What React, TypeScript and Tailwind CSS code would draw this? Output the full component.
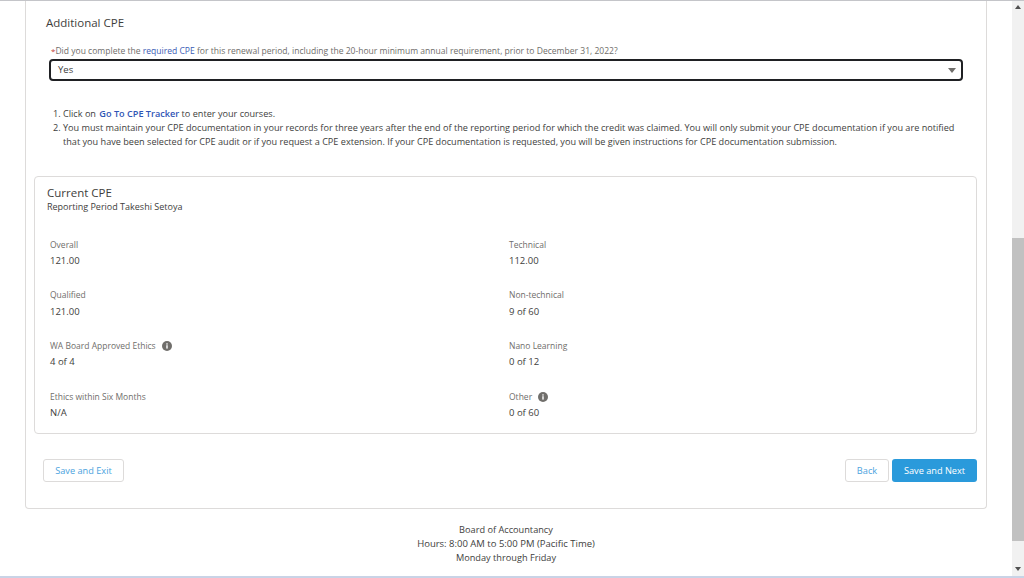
const font = { fontFamily: '"Open Sans", "Noto Sans", sans-serif' };

const InfoIcon = () => (
  <svg viewBox="0 0 10 10" className="w-[10px] h-[10px] ml-[6px]">
    <circle cx="5" cy="5" r="5" fill="#706e6b" />
    <rect x="4.3" y="4.2" width="1.4" height="3.4" fill="#fff" />
    <rect x="4.3" y="2.3" width="1.4" height="1.3" fill="#fff" />
  </svg>
);

const Stat = ({ label, value, info }: { label: string; value: string; info?: boolean }) => (
  <div className="h-[50.7px]">
    <div className="flex items-center h-[14px] text-[8.5px] text-[#706e6b]">
      {label}
      {info && <InfoIcon />}
    </div>
    <div className="mt-[1px] text-[9.5px] leading-[15px] text-[#3e3e3c]">{value}</div>
  </div>
);

const App = () => {
  return (
    <div className="flex h-[578px] w-[1024px] overflow-hidden bg-white" style={font}>
      <main className="flex-1 min-w-0 flex flex-col border-t border-[#c4c5c9] border-b-2 border-b-[#c9d3e6]">
        {/* outer card, top is cut off by the scroll */}
        <section className="ml-[25px] mr-[25px] h-[508px] border-x border-b border-[#dddbda] rounded-b-[4px] pl-[8px] pr-[9px] shrink-0">
          <h2 className="pl-[12px] pt-[14px] text-[11.5px] leading-[16px] text-[#3e3e3c]">Additional CPE</h2>
          <p className="h-[12px] pl-[17px] mt-[14px] text-[8.55px] leading-[12px] text-[#706e6b]">
            <span className="text-[8px] leading-none text-[#c23934]">*</span>
            Did you complete the <span className="text-[#3b5bb5]">required CPE</span> for this renewal period, including
            the 20-hour minimum annual requirement, prior to December 31, 2022?
          </p>
          <div className="ml-[15px] mr-[14px] mt-[2px] h-[22px] flex items-center justify-between border-2 border-[#1f2023] rounded-[4px] pl-[7px] pr-[5px] text-[9.5px] text-[#3e3e3c]">
            <span className="pt-[1px]">Yes</span>
            <svg viewBox="0 0 8 5" className="w-[8px] h-[5px]">
              <path d="M0 0h8L4 5z" fill="#706e6b" />
            </svg>
          </div>
          <ol className="mt-[26px] pl-[19px] pr-[14px] text-[9.15px] leading-[14px] text-[#3e3e3c]">
            <li className="pl-[10px] -indent-[10px]">
              1. Click on <span className="ml-[1px] font-semibold text-[#2f55b5]">Go To CPE Tracker</span> to enter your
              courses.
            </li>
            <li className="pl-[10px] -indent-[10px]">
              2. You must maintain your CPE documentation in your records for three years after the end of the reporting
              period for which the credit was claimed. You will only submit your CPE documentation if you are notified
              that you have been selected for CPE audit or if you request a CPE extension. If your CPE documentation is
              requested, you will be given instructions for CPE documentation submission.
            </li>
          </ol>
          <div className="mt-[27px] h-[258px] border border-[#dddbda] rounded-[4px] pl-[12px] pt-[8px]">
            <h3 className="text-[11.5px] leading-[15px] text-[#3e3e3c]">Current CPE</h3>
            <p className="text-[9px] leading-[13px] text-[#3e3e3c]">Reporting Period Takeshi Setoya</p>
            <div className="mt-[25px] pl-[3px] grid grid-cols-2 w-[921px]">
              <Stat label="Overall" value="121.00" />
              <Stat label="Technical" value="112.00" />
              <Stat label="Qualified" value="121.00" />
              <Stat label="Non-technical" value="9 of 60" />
              <Stat label="WA Board Approved Ethics" value="4 of 4" info />
              <Stat label="Nano Learning" value="0 of 12" />
              <Stat label="Ethics within Six Months" value="N/A" />
              <Stat label="Other" value="0 of 60" info />
            </div>
          </div>
          <div className="mt-[25px] flex items-center justify-between text-[9.2px]">
            <button className="ml-[9px] h-[23px] w-[81px] border border-[#dddbda] rounded-[3px] text-[#4ba3de]">
              Save and Exit
            </button>
            <div className="flex gap-[3px]">
              <button className="h-[23px] w-[44px] border border-[#dddbda] rounded-[3px] text-[#4ba3de]">Back</button>
              <button className="h-[23px] w-[85px] rounded-[3px] bg-[#2a9adb] text-white">Save and Next</button>
            </div>
          </div>
        </section>
        <footer className="pt-[14px] text-center text-[9.2px] leading-[14px] text-[#3e3e3c]">
          <p>Board of Accountancy</p>
          <p className="text-[9.5px]">Hours: 8:00 AM to 5:00 PM (Pacific Time)</p>
          <p>Monday through Friday</p>
        </footer>
      </main>
      {/* browser scrollbar */}
      <aside className="w-[12px] shrink-0 flex flex-col bg-[#f1f1f1] border-t border-[#c4c5c9] border-b-2 border-b-[#c9d3e6]">
        <div className="h-[237px] pt-[4px] flex justify-center">
          <svg viewBox="0 0 6 4" className="w-[6px] h-[4px]">
            <path d="M3 0l3 4H0z" fill="#505050" />
          </svg>
        </div>
        <div className="h-[303px] bg-[#c1c1c1]" />
        <div className="flex-1 flex items-end justify-center pb-[5px]">
          <svg viewBox="0 0 6 4" className="w-[6px] h-[4px]">
            <path d="M0 0h6L3 4z" fill="#505050" />
          </svg>
        </div>
      </aside>
    </div>
  );
};

export default App;
